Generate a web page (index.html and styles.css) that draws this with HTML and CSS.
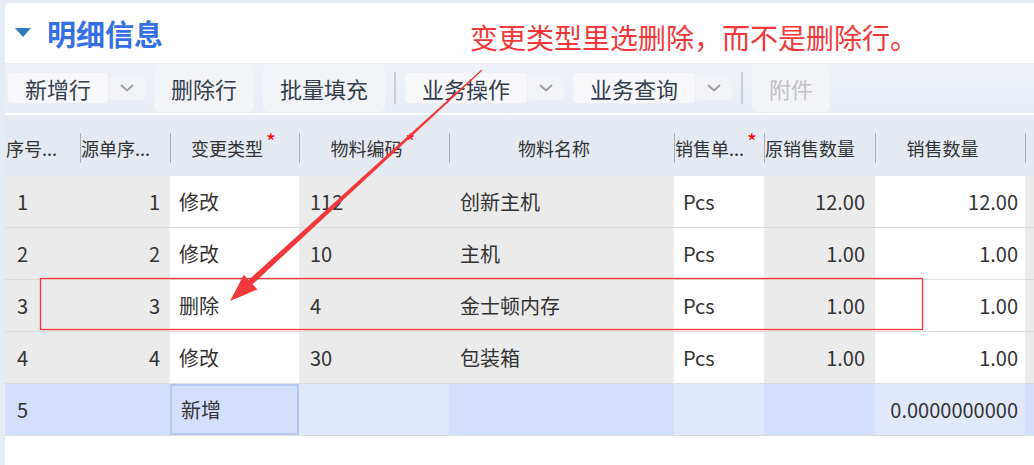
FILE: index.html
```html
<!DOCTYPE html>
<html lang="zh-CN">
<head>
    <meta charset="UTF-8">
    <title>明细信息</title>
    <link rel="stylesheet" href="styles.css">
</head>
<body>
<div class="panel">
    <div class="head">
        <span class="caret"></span>
        <h2 class="title">明细信息</h2>
    </div>
    <div class="toolbar">
        <div class="split">
            <span class="main">新增行</span>
            <span class="drop"><svg width="14" height="8" viewBox="0 0 14 8"><polyline points="1,1 7,6.5 13,1" fill="none" stroke="#a0a0a4" stroke-width="2"/></svg></span>
        </div>
        <span class="btn">删除行</span>
        <span class="btn">批量填充</span>
        <span class="sep"></span>
        <div class="split">
            <span class="main">业务操作</span>
            <span class="drop"><svg width="14" height="8" viewBox="0 0 14 8"><polyline points="1,1 7,6.5 13,1" fill="none" stroke="#a0a0a4" stroke-width="2"/></svg></span>
        </div>
        <div class="split">
            <span class="main">业务查询</span>
            <span class="drop"><svg width="14" height="8" viewBox="0 0 14 8"><polyline points="1,1 7,6.5 13,1" fill="none" stroke="#a0a0a4" stroke-width="2"/></svg></span>
        </div>
        <span class="sep"></span>
        <span class="btn disabled">附件</span>
    </div>

    <div class="grid">
        <div class="thead">
            <div class="th left"><span>序号...</span></div>
            <div class="th left"><span>源单序...</span></div>
            <div class="th"><span>变更类型<i class="req">*</i></span></div>
            <div class="th"><span>物料编码<i class="req">*</i></span></div>
            <div class="th"><span>物料名称</span></div>
            <div class="th left"><span>销售单...<i class="req">*</i></span></div>
            <div class="th left"><span>原销售数量</span></div>
            <div class="th"><span>销售数量</span></div>
            <div class="th"></div>
        </div>

        <div class="row">
            <div class="td g c1">1</div>
            <div class="td g r c2">1</div>
            <div class="td w c3">修改</div>
            <div class="td g c4">112</div>
            <div class="td g c5">创新主机</div>
            <div class="td w c6">Pcs</div>
            <div class="td g r c7">12.00</div>
            <div class="td w r c8">12.00</div>
            <div class="td g"></div>
        </div>
        <div class="row">
            <div class="td g c1">2</div>
            <div class="td g r c2">2</div>
            <div class="td w c3">修改</div>
            <div class="td g c4">10</div>
            <div class="td g c5">主机</div>
            <div class="td w c6">Pcs</div>
            <div class="td g r c7">1.00</div>
            <div class="td w r c8">1.00</div>
            <div class="td g"></div>
        </div>
        <div class="row">
            <div class="td g c1">3</div>
            <div class="td g r c2">3</div>
            <div class="td w c3">删除</div>
            <div class="td g c4">4</div>
            <div class="td g c5">金士顿内存</div>
            <div class="td w c6">Pcs</div>
            <div class="td g r c7">1.00</div>
            <div class="td w r c8">1.00</div>
            <div class="td g"></div>
        </div>
        <div class="row">
            <div class="td g c1">4</div>
            <div class="td g r c2">4</div>
            <div class="td w c3">修改</div>
            <div class="td g c4">30</div>
            <div class="td g c5">包装箱</div>
            <div class="td w c6">Pcs</div>
            <div class="td g r c7">1.00</div>
            <div class="td w r c8">1.00</div>
            <div class="td g"></div>
        </div>
        <div class="row new">
            <div class="td b c1">5</div>
            <div class="td b r c2"></div>
            <div class="td b sel c3">新增</div>
            <div class="td lb c4"></div>
            <div class="td b c5"></div>
            <div class="td lb c6"></div>
            <div class="td b r c7"></div>
            <div class="td lb r c8">0.0000000000</div>
            <div class="td b"></div>
        </div>
    </div>
</div>

<!-- 截图上的标注 -->
<div class="note">变更类型里选删除，而不是删除行。</div>
<svg class="mark" width="1034" height="465" viewBox="0 0 1034 465">
    <rect x="40.5" y="278.5" width="882" height="51" fill="none" stroke="#f2383a" stroke-width="1.3"/>
    <polygon fill="#f2383a" points="230,301 257.4,289.5 252.6,284.2 482.4,70.4 481.6,69.6 248.6,280 243.8,274.7"/>
</svg>
</body>
</html>
```

FILE: styles.css
```css
*{
    margin: 0;
    padding: 0;
    box-sizing: border-box;
}
body{
    position: relative;
    height: 465px;
    overflow: hidden;
    background-color: #e6ebf4;
    font-family: "Noto Sans CJK SC", "Noto Sans", sans-serif;
    color: #333;
}
.panel{
    margin: 3px 0 0 5px;
    height: 462px;
    background-color: #fff;
    border-top-left-radius: 5px;
}

/* 标题 */
.head{
    height: 60px;
    display: flex;
    align-items: center;
    padding-left: 10px;
}
.caret{
    width: 0;
    height: 0;
    border-left: 8px solid transparent;
    border-right: 8px solid transparent;
    border-top: 9px solid #2b7bbd;
    margin: 0 16px 2px 0;
}
.title{
    font-size: 29px;
    font-weight: bold;
    color: #3470e4;
    line-height: 36px;
}

/* 工具栏 */
.toolbar{
    height: 50px;
    margin-bottom: 2px;
    display: flex;
    align-items: center;
    gap: 9px;
    padding-left: 3px;
    background: linear-gradient(#eef1f7, #e8edf6);
    font-size: 22px;
    color: #333d4d;
}
.btn{
    height: 48px;
    line-height: 48px;
    padding: 0 17px;
    border-radius: 6px;
    background-color: #f3f4f7;
}
.btn.disabled{
    color: #c2c2c4;
}
.split{
    display: flex;
    align-items: center;
    gap: 1px;
}
.split .main{
    height: 30px;
    line-height: 30px;
    padding: 0 17px;
    border-radius: 4px;
    background-color: #f8f8fa;
}
.split .drop{
    width: 36px;
    height: 24px;
    display: flex;
    align-items: center;
    justify-content: center;
    border-radius: 4px;
    background-color: #f2f3f6;
}
.sep{
    width: 2px;
    height: 32px;
    background-color: #c9ccd2;
}

/* 表格 */
.thead, .row{
    display: grid;
    grid-template-columns: 75px 90px 129px 150px 225px 90px 111px 150px 1fr;
}
.thead{
    height: 61px;
    background-color: #e4e9f2;
    font-size: 18px;
}
.th{
    position: relative;
    display: flex;
    align-items: center;
    justify-content: center;
    padding: 5px 15px 0 0;
    white-space: nowrap;
}
.th.left{
    justify-content: flex-start;
    padding-left: 1px;
}
.th span{
    position: relative;
}
.th + .th::before{
    content: "";
    position: absolute;
    left: 0;
    top: 18px;
    width: 1px;
    height: 30px;
    background-color: #aab0b8;
}
.req{
    position: absolute;
    left: 100%;
    top: -4px;
    margin-left: 3px;
    font-style: normal;
    font-size: 21px;
    line-height: 21px;
    color: #f00;
}
.row{
    height: 52px;
    border-bottom: 1px solid #dcdcdc;
    font-size: 20px;
}
.td{
    display: flex;
    align-items: center;
    padding: 0 10px;
    white-space: nowrap;
}
.td.r{
    justify-content: flex-end;
}
.g{ background-color: #ebebeb; }
.w{ background-color: #fff; }
.b{ background-color: #d3dffb; }
.lb{ background-color: #e1e8fc; }
.sel{ box-shadow: inset 0 0 0 2px #b5c9f2; }
.c1{ padding-left: 12px; }
.c3{ padding-left: 9px; }
.sel.c3{ padding-left: 11px; }
.c4, .c5{ padding-left: 11px; }
.c6{ padding-left: 9px; }
.c8{ padding-right: 7px; }

/* 标注 */
.note{
    position: absolute;
    left: 470px;
    top: 21px;
    font-size: 28px;
    line-height: 32px;
    color: #f2383a;
}
.mark{
    position: absolute;
    left: 0;
    top: 0;
}
```
